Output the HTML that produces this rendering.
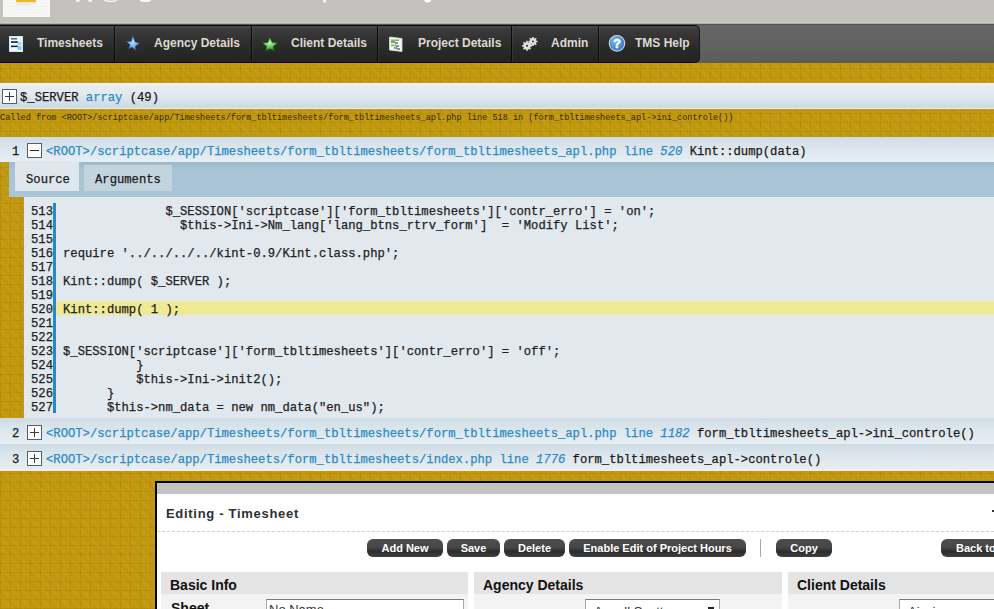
<!DOCTYPE html>
<html><head><meta charset="utf-8">
<style>
*{margin:0;padding:0;box-sizing:border-box}
html,body{width:994px;height:609px;overflow:hidden}
body{position:relative;background-color:#c0970f;background-image:repeating-linear-gradient(90deg,rgba(80,50,0,0.09) 0 1px,transparent 1px 10px),repeating-linear-gradient(0deg,rgba(80,50,0,0.09) 0 1px,transparent 1px 9px),repeating-linear-gradient(45deg,rgba(255,220,90,0.06) 0 3px,transparent 3px 7px);font-family:"Liberation Sans",sans-serif}
.abs{position:absolute}
#top{left:0;top:0;width:994px;height:24px;background:linear-gradient(#c3c2be 22px,#cdccc8 22px,#cdccc8 23px,#b0afab 23px)}
#logo{left:3px;top:0;width:47px;height:17px;background:#f6f6f4}
#menuwrap{left:0;top:24px;width:994px;height:39px;border-top:1px solid #555;background:linear-gradient(#666,#626262 50%,#5c5c5c)}
#menu{left:0;top:25px;width:700px;height:38px;background:linear-gradient(#4a4a4a,#3b3b3b 3px,#313131 14px,#282828 26px,#222 37px);border-top:1px solid #0a0a0a;border-bottom:1px solid #0a0a0a;border-right:1px solid #0a0a0a;border-radius:0 5px 5px 0}
.mi{position:absolute;top:0;height:36px;border-right:1px solid #0a0a0a;box-shadow:1px 0 0 rgba(255,255,255,0.06)}
.mt{position:absolute;top:10px;font-size:12px;font-weight:bold;color:#dcd9d0;white-space:nowrap}
.mono{font-family:"Liberation Mono",monospace;-webkit-text-stroke:0.25px currentColor}
.bar{background:linear-gradient(#cfdce5,#dbe5ec 40%,#e8eff3)}

.plus,.minus{width:15px;height:15px;border:1px solid #506070;background:#fff}
.plus:before{content:"";position:absolute;left:2px;top:6px;width:9px;height:1px;background:#3a3f44}
.plus:after{content:"";position:absolute;left:6px;top:2px;width:1px;height:9px;background:#3a3f44}
.minus:before{content:"";position:absolute;left:2px;top:6px;width:9px;height:1.3px;background:#2a2f34}
.code{font-size:12.2px;line-height:14px;color:#222;white-space:pre}
.lk{color:#2b8ac6}
.lk i{font-style:italic}

.btn{top:539px;height:18px;border-radius:6px;background:linear-gradient(#4e4e4e,#474747 45%,#3a3a3a 58%,#2c2c2c 70%,#404040);color:#fff;font-size:11px;font-weight:bold;text-align:center;line-height:18px;white-space:nowrap;overflow:hidden}
.panel{top:572px;height:37px;background:#f3f3f3}
.ph{height:22px;background:#e4e4e4;font-size:14px;font-weight:bold;color:#111;padding-left:9px;line-height:26px;white-space:nowrap}
.inp{top:599px;height:14px;background:#fff;border-top:1px solid #7a7a7a;border-left:1px solid #a9a9a9;border-right:1px solid #a9a9a9;overflow:hidden}
.inp span{position:absolute;left:3px;top:2px;font-size:13px;color:#333;white-space:nowrap}
</style></head><body>
<div id="top" class="abs"></div>
<div id="logo" class="abs"></div>
<svg class="abs" style="left:0;top:0" width="500" height="24" viewBox="0 0 500 24">
<rect x="16" y="0" width="20" height="2.3" rx="1" fill="#e6b735"/>
<rect x="15" y="2.3" width="22" height="1.2" fill="#f0e2b8" opacity="0.7"/>
<rect x="16" y="4" width="14" height="1" fill="#cfe3ee" opacity="0.8"/>
<rect x="6" y="6" width="40" height="1" fill="#e4e4e0" opacity="0.5"/>
<rect x="14" y="9" width="22" height="1" fill="#ece6ee" opacity="0.5"/>
<rect x="16" y="12" width="26" height="1" fill="#e8ece8" opacity="0.5"/>
<g fill="#fafafa">
<rect x="76" y="0" width="3.5" height="1.8"/>
<rect x="88.5" y="0" width="3.5" height="1.8"/>
<path d="M104 0h2c1 0.6 3 0.8 5 0.8s4-0.4 5-0.8h1v0.6c-1 1-3.5 1.5-6.5 1.5s-5.5-0.6-6.5-1.5z"/>
<path d="M140 0h11v0.8c-1 0.8-3 1.2-5.5 1.2s-4.5-0.4-5.5-1.2z"/>
<path d="M323 0h3v1.5c0 0.8-1 1.2-2.5 1.2z"/>
<path d="M424 0h7v0.8c0 1-1.5 1.6-3.5 1.6h-2z"/>
</g>
</svg>
<div id="menuwrap" class="abs"></div>
<div id="menu" class="abs">
  <div class="mi" style="left:0;width:115px"><div class="mt" style="left:37px">Timesheets</div></div>
  <div class="mi" style="left:115px;width:137px"><div class="mt" style="left:39px">Agency Details</div></div>
  <div class="mi" style="left:252px;width:126px"><div class="mt" style="left:39px">Client Details</div></div>
  <div class="mi" style="left:378px;width:134px"><div class="mt" style="left:40px">Project Details</div></div>
  <div class="mi" style="left:512px;width:87px"><div class="mt" style="left:39px">Admin</div></div>
  <div class="mi" style="left:599px;width:100px;border-right:none"><div class="mt" style="left:36px">TMS Help</div></div>
</div>


<svg class="abs" style="left:0;top:0" width="994" height="70" viewBox="0 0 994 70">
<defs>
<radialGradient id="gb" cx="0.45" cy="0.4" r="0.6"><stop offset="0" stop-color="#b8e0fb"/><stop offset="0.6" stop-color="#6fb4ea"/><stop offset="1" stop-color="#1f5c9c"/></radialGradient>
<radialGradient id="gg" cx="0.45" cy="0.4" r="0.6"><stop offset="0" stop-color="#c4f0b8"/><stop offset="0.55" stop-color="#62c257"/><stop offset="1" stop-color="#116611"/></radialGradient>
<radialGradient id="hb" cx="0.4" cy="0.35" r="0.7"><stop offset="0" stop-color="#7cc0f0"/><stop offset="1" stop-color="#2a70b8"/></radialGradient>
</defs>
<!-- timesheets doc -->
<rect x="9.5" y="36.5" width="13" height="15" fill="#eaf5fd" stroke="#cfe6f7" stroke-width="1"/>
<rect x="11" y="38" width="6" height="1.5" fill="#5a6a7a"/>
<rect x="11" y="41.3" width="7" height="1.6" fill="#0d2030"/>
<rect x="11" y="43" width="6" height="1.5" fill="#ffffff"/>
<rect x="17.5" y="42" width="4" height="3" fill="#a8d4f2"/>
<rect x="11" y="45.6" width="7" height="1.6" fill="#0d2030"/>
<rect x="12" y="47.5" width="5" height="2" fill="#ffffff"/>
<rect x="17.5" y="46" width="4" height="4" fill="#8cc6ee"/>
<!-- stars -->
<path d="M126.4 41.3 L131.2 41.6 L132.8 35.6 L135.1 41.9 L140.0 43.2 L135.6 45.9 L135.8 51.0 L132.4 47.2 L128.5 48.8 L130.2 44.9Z" fill="url(#gb)" stroke="#1d4f88" stroke-width="0.6"/>
<path d="M262.2 42.6 L267.8 42.4 L269.7 37.0 L272.2 42.3 L278.2 42.6 L273.5 46.5 L274.8 51.4 L270.0 48.9 L265.2 51.4 L266.5 46.4Z" fill="url(#gg)" stroke="#0d4d0d" stroke-width="0.6"/>
<!-- project doc -->
<path d="M389.5 37 L402 38.5 L402 51.5 L389.5 50 Z" fill="#f2f6f0" stroke="#d8e0d8" stroke-width="0.8"/>
<rect x="391" y="39.5" width="8" height="1.5" fill="#7db85a"/>
<rect x="391" y="41.5" width="4" height="1" fill="#263040"/>
<rect x="395" y="42.5" width="3" height="1" fill="#263040"/>
<rect x="391" y="44.5" width="5" height="1.8" fill="#86c060"/>
<rect x="396" y="45.5" width="3" height="1" fill="#263040"/>
<rect x="394" y="47.5" width="3" height="1" fill="#263040"/>
<rect x="397" y="48.5" width="3" height="1" fill="#263040"/>
<!-- gears -->
<g fill="#e6e8ea" stroke="#9aa0a8" stroke-width="0.4">
<circle cx="527" cy="45.8" r="3.6"/>
<circle cx="533" cy="41.5" r="3.2"/>
</g>
<g stroke="#e0e2e5" stroke-width="1.6" stroke-linecap="butt">
<path d="M527 40.8V50.8 M522 45.8H532 M523.5 42.3L530.5 49.3 M530.5 42.3L523.5 49.3"/>
<path d="M533 37V46 M528.5 41.5H537.5 M529.8 38.3L536.2 44.7 M536.2 38.3L529.8 44.7"/>
</g>
<circle cx="527" cy="45.8" r="1" fill="#222"/>
<circle cx="533" cy="41.5" r="0.9" fill="#222"/>
<!-- help -->
<circle cx="617" cy="43.3" r="7.8" fill="url(#hb)" stroke="#c4dbec" stroke-width="1.1"/>
<text x="617" y="47.8" text-anchor="middle" font-family="Liberation Sans" font-weight="bold" font-size="12.5" fill="#fff" stroke="#fff" stroke-width="0.4">?</text>
</svg>
<div class="abs" style="left:0;top:83px;width:994px;height:26px;border-top:1px solid #f3f6f8;border-bottom:1px solid #e6eef2;background:linear-gradient(#e9eff3,#e1e9ef 45%,#ccdae4)"></div>
<div class="abs plus" style="left:2px;top:89px"></div>
<div class="abs mono" style="left:20px;top:91px;font-size:12.2px;line-height:14px;color:#1a1a1a;white-space:pre">$_SERVER <span style="color:#2b8ac6">array</span> (49)</div>
<div class="abs mono" style="left:0px;top:113px;font-size:8.55px;line-height:10px;color:#33290a;-webkit-text-stroke:0;white-space:pre">Called from &lt;ROOT&gt;/scriptcase/app/Timesheets/form_tbltimesheets/form_tbltimesheets_apl.php line 518 in (form_tbltimesheets_apl-&gt;ini_controle())</div>

<div class="abs bar" style="left:0;top:137px;width:994px;height:25px"></div>
<div class="abs mono" style="left:12px;top:145px;font-size:12.2px;line-height:14px;color:#1a1a1a">1</div>
<div class="abs minus" style="left:27px;top:143px"></div>
<div class="abs mono" style="left:46px;top:145px;font-size:12.2px;line-height:14px;color:#1a1a1a;white-space:pre"><span class="lk">&lt;ROOT&gt;/scriptcase/app/Timesheets/form_tbltimesheets/form_tbltimesheets_apl.php line <i>520</i></span> Kint::dump(data)</div>

<div class="abs" style="left:9px;top:162px;width:985px;height:35px;background:linear-gradient(#9dbacd,#a8c4d5 25%,#a9c5d6)"></div>
<div class="abs" style="left:15px;top:161px;width:64px;height:30px;background:#dfe7ed"></div>
<div class="abs mono" style="left:26px;top:173px;font-size:12.2px;line-height:14px;color:#1a1a1a">Source</div>
<div class="abs" style="left:84px;top:165px;width:88px;height:26px;background:#c3d4df"></div>
<div class="abs mono" style="left:95px;top:173px;font-size:12.2px;line-height:14px;color:#1a1a1a">Arguments</div>

<div class="abs" style="left:24px;top:197px;width:970px;height:221px;background:#e1e8ee"></div>
<div class="abs" style="left:53px;top:203px;width:3px;height:210px;background:#1d8dd0"></div>
<div class="abs" style="left:56px;top:301px;width:938px;height:14px;background:#efe993"></div>
<div class="abs mono code" style="left:28px;top:205px;width:25px;text-align:right">513
514
515
516
517
518
519
520
521
522
523
524
525
526
527</div>
<div class="abs mono code" style="left:63px;top:205px">              $_SESSION['scriptcase']['form_tbltimesheets']['contr_erro'] = 'on';
                $this-&gt;Ini-&gt;Nm_lang['lang_btns_rtrv_form']  = 'Modify List';

require '../../../../kint-0.9/Kint.class.php';

Kint::dump( $_SERVER );

Kint::dump( 1 );


$_SESSION['scriptcase']['form_tbltimesheets']['contr_erro'] = 'off';
          }
          $this-&gt;Ini-&gt;init2();
      }
      $this-&gt;nm_data = new nm_data("en_us");</div>

<div class="abs bar" style="left:0;top:418px;width:994px;height:26px"></div>
<div class="abs mono" style="left:12px;top:427px;font-size:12.2px;line-height:14px;color:#1a1a1a">2</div>
<div class="abs plus" style="left:27px;top:425px"></div>
<div class="abs mono" style="left:46px;top:427px;font-size:12.2px;line-height:14px;color:#1a1a1a;white-space:pre"><span class="lk">&lt;ROOT&gt;/scriptcase/app/Timesheets/form_tbltimesheets/form_tbltimesheets_apl.php line <i>1182</i></span> form_tbltimesheets_apl-&gt;ini_controle()</div>

<div class="abs bar" style="left:0;top:444px;width:994px;height:27px;border-bottom:1px solid #f4f0dc"></div>
<div class="abs mono" style="left:12px;top:453px;font-size:12.2px;line-height:14px;color:#1a1a1a">3</div>
<div class="abs plus" style="left:27px;top:451px"></div>
<div class="abs mono" style="left:46px;top:453px;font-size:12.2px;line-height:14px;color:#1a1a1a;white-space:pre"><span class="lk">&lt;ROOT&gt;/scriptcase/app/Timesheets/form_tbltimesheets/index.php line <i>1776</i></span> form_tbltimesheets_apl-&gt;controle()</div>

<div class="abs" style="left:155px;top:481px;width:839px;height:128px;border-left:2px solid #050505;border-top:2px solid #050505;background:#fff"></div>
<div class="abs" style="left:157px;top:483px;width:837px;height:11px;background:#c3c3c3"></div>
<div class="abs" style="left:166px;top:506px;font-size:13px;font-weight:bold;color:#2c3034;letter-spacing:0.7px;white-space:nowrap">Editing - Timesheet</div>
<div class="abs" style="left:992px;top:510px;width:2px;height:1.5px;background:#333"></div>
<div class="abs" style="left:157px;top:531px;width:837px;height:1px;border-top:1px dashed #cfcfcf"></div>
<div class="abs btn" style="left:367px;width:76px">Add New</div>
<div class="abs btn" style="left:447px;width:53px">Save</div>
<div class="abs btn" style="left:504px;width:61px">Delete</div>
<div class="abs btn" style="left:569px;width:177px">Enable Edit of Project Hours</div>
<div class="abs" style="left:760px;top:539px;width:1px;height:18px;background:#a8a8a8"></div>
<div class="abs btn" style="left:776px;width:56px">Copy</div>
<div class="abs btn" style="left:941px;width:70px;text-align:left;padding-left:15px">Back to</div>

<div class="abs panel" style="left:161px;width:307px"><div class="ph">Basic Info</div></div>
<div class="abs panel" style="left:474px;width:308px"><div class="ph">Agency Details</div></div>
<div class="abs panel" style="left:788px;width:206px"><div class="ph">Client Details</div></div>
<div class="abs" style="left:171px;top:600px;font-size:14px;font-weight:bold;color:#111">Sheet</div>
<div class="abs inp" style="left:266px;width:198px"><span style="left:2px">No Name</span></div>
<div class="abs inp" style="left:585px;width:135px"><span style="left:8px;top:3.5px">Angell Scott</span><i style="position:absolute;left:122px;top:7px;width:6px;height:4px;background:#222"></i></div>
<div class="abs inp" style="left:899px;width:100px"><span style="left:8px;top:3.5px">Aixxi</span></div>
</body></html>
